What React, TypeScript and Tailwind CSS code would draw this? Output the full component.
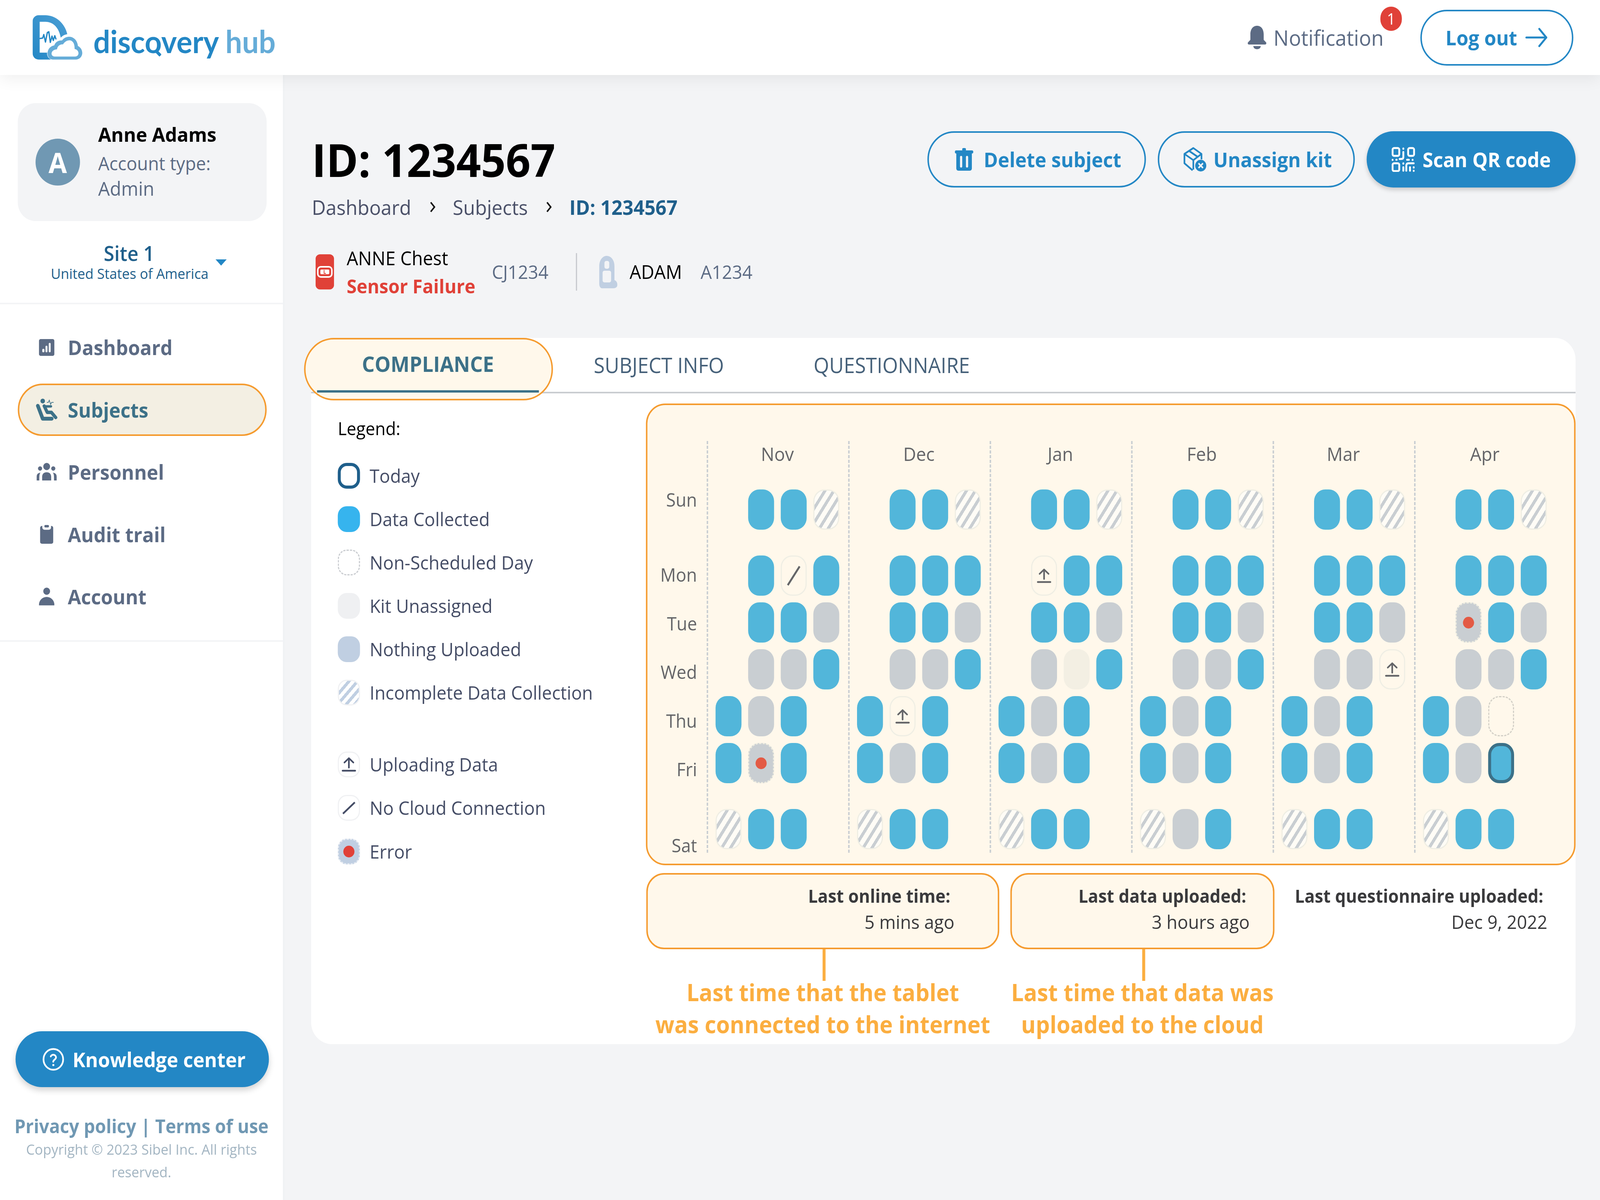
import React from "react";

const MONTHS: [string, string[]][] = [
  ["Nov", [".bbh", ".bnb", ".bbg", ".ggb", "bgb.", "beb.", "hbb."]],
  ["Dec", [".bbh", ".bbb", ".bbg", ".ggb", "bub.", "bgb.", "hbb."]],
  ["Jan", [".bbh", ".ubb", ".bbg", ".gkb", "bgb.", "bgb.", "hbb."]],
  ["Feb", [".bbh", ".bbb", ".bbg", ".ggb", "bgb.", "bgb.", "hgb."]],
  ["Mar", [".bbh", ".bbb", ".bbg", ".ggu", "bgb.", "bgb.", "hbb."]],
  ["Apr", [".bbh", ".bbb", ".ebg", ".ggb", "bgx.", "bgt.", "hbb."]],
];

const ROW_MARGIN = ["mt-[58px]", "mt-[66px]", "mt-[17px]", "mt-[17px]", "mt-[17px]", "mt-[17px]", "mt-[66px]"];

const DAYS: [string, string][] = [
  ["Sun", "mt-[117px]"],
  ["Mon", "mt-[126px]"],
  ["Tue", "mt-[59px]"],
  ["Wed", "mt-[58px]"],
  ["Thu", "mt-[59px]"],
  ["Fri", "mt-[58px]"],
  ["Sat", "mt-[129px]"],
];

function UploadGlyph({ color, size }: { color: string; size: number }) {
  return (
    <svg width={size} height={size} viewBox="0 0 40 40" fill="none" stroke={color} strokeWidth="4.4" strokeLinecap="round" strokeLinejoin="round">
      <path d="M8 15 L20 4 L32 15" />
      <path d="M20 5 V28" />
      <path d="M3 36 H37" />
    </svg>
  );
}

function Cell({ k }: { k: string }) {
  const base = "w-[70px] h-[103px] rounded-[30px] shrink-0";
  if (k === ".") return <div className="w-[70px] h-[103px] shrink-0" />;
  if (k === "b") return <div className={`${base} bg-[#52B6DA]`} />;
  if (k === "g") return <div className={`${base} bg-[#C9CED2]`} />;
  if (k === "k") return <div className={`${base} bg-[#F3EFE3]`} />;
  if (k === "t") return <div className={`${base} bg-[#52B6DA] border-[8px] border-[#3C7188]`} />;
  if (k === "x") return <div className={`${base} border-[3px] border-dashed border-[#D2CFC6]`} />;
  if (k === "h")
    return (
      <div className={`${base} border-[3px] border-[#EFEEE4] bg-[repeating-linear-gradient(123deg,#C9CED2_0,#C9CED2_8px,#FFFCF6_8px,#FFFCF6_20px)]`} />
    );
  if (k === "e")
    return (
      <div className={`${base} bg-[#C9CED2] border-[3px] border-dashed border-[#ECEBDF] flex items-center justify-center`}>
        <div className="w-[30px] h-[30px] rounded-full bg-[#E35A44]" />
      </div>
    );
  if (k === "u")
    return (
      <div className={`${base} border-[3px] border-[#EFEEE4] flex items-center justify-center`}>
        <UploadGlyph color="#646568" size={40} />
      </div>
    );
  return (
    <div className={`${base} border-[3px] border-[#EFEEE4] flex items-center justify-center`}>
      <svg width="44" height="60" viewBox="0 0 44 60" fill="none" stroke="#646568" strokeWidth="5">
        <path d="M6 54 L38 6" />
      </svg>
    </div>
  );
}

function Month({ name, rows }: { name: string; rows: string[] }) {
  return (
    <div className="w-[382px] shrink-0 border-l-4 border-dashed border-[#C9CED2] pl-[20px] pb-[9px]">
      <div className="h-[66px] leading-[66px] text-center text-[48px] text-[#646568] w-[334px]">{name}</div>
      {rows.map((r, i) => (
        <div key={i} className={`flex gap-[18px] ${ROW_MARGIN[i]}`}>
          {r.split("").map((c, j) => (
            <Cell key={j} k={c} />
          ))}
        </div>
      ))}
    </div>
  );
}

function LegendRow({ label, mt, children }: { label: string; mt: string; children: React.ReactNode }) {
  return (
    <div className={`flex items-center h-[66px] ${mt}`}>
      {children}
      <span className="ml-[26px] text-[48px] text-[#454D66] whitespace-nowrap">{label}</span>
    </div>
  );
}

const swatch = "w-[60px] h-[66px] rounded-[24px] shrink-0";

function Legend() {
  return (
    <div className="w-[904px] shrink-0 pl-[72px] pt-[56px]">
      <div className="h-[66px] leading-[66px] text-[46px] font-medium text-black">Legend:</div>
      <LegendRow label="Today" mt="mt-[56px]">
        <div className={`${swatch} bg-white border-[8px] border-[#1F5F8B]`} />
      </LegendRow>
      <LegendRow label="Data Collected" mt="mt-[45px]">
        <div className={`${swatch} bg-[#36B4EE]`} />
      </LegendRow>
      <LegendRow label="Non-Scheduled Day" mt="mt-[45px]">
        <div className={`${swatch} border-[3px] border-dashed border-[#C9CCD0]`} />
      </LegendRow>
      <LegendRow label="Kit Unassigned" mt="mt-[45px]">
        <div className={`${swatch} bg-[#EFF0F2]`} />
      </LegendRow>
      <LegendRow label="Nothing Uploaded" mt="mt-[45px]">
        <div className={`${swatch} bg-[#C0CFE2]`} />
      </LegendRow>
      <LegendRow label="Incomplete Data Collection" mt="mt-[45px]">
        <div className={`${swatch} border-[3px] border-[#F0F1F3] bg-[repeating-linear-gradient(132deg,#C0CFE2_0,#C0CFE2_8px,#FFFFFF_8px,#FFFFFF_17px)]`} />
      </LegendRow>
      <LegendRow label="Uploading Data" mt="mt-[118px]">
        <div className={`${swatch} border-[3px] border-[#F0F1F3] flex items-center justify-center`}>
          <UploadGlyph color="#454D66" size={40} />
        </div>
      </LegendRow>
      <LegendRow label="No Cloud Connection" mt="mt-[45px]">
        <div className={`${swatch} border-[3px] border-[#F0F1F3] flex items-center justify-center`}>
          <svg width="40" height="36" viewBox="0 0 40 36" fill="none" stroke="#454D66" strokeWidth="4.5">
            <path d="M4 33 L36 4" />
          </svg>
        </div>
      </LegendRow>
      <LegendRow label="Error" mt="mt-[46px]">
        <div className={`${swatch} bg-[#C0CFE2] border-[3px] border-dashed border-[#E6EBF2] flex items-center justify-center`}>
          <div className="w-[30px] h-[30px] rounded-full bg-[#E04138]" />
        </div>
      </LegendRow>
    </div>
  );
}

function Logo() {
  return (
    <div className="flex items-center">
      <svg width="135" height="114" viewBox="172 72 268 226">
        <defs>
          <linearGradient id="dg" x1="0" y1="1" x2="1" y2="0">
            <stop offset="0" stopColor="#2387C5" />
            <stop offset="1" stopColor="#4C9FD5" />
          </linearGradient>
        </defs>
        <path
          d="M204 72 H240 C295 72 345 112 358 168 C343 170 332 176 323 186 C314 138 285 105 240 105 H210 V262 H250 C248 272 252 288 270 297 H204 C186 297 172 283 172 265 V104 C172 86 186 72 204 72Z"
          fill="url(#dg)"
        />
        <path d="M212 190 L226 188 L232 170 L241 208 L251 160 L259 156 L267 210 L276 178 L283 200 L291 176 L297 192" fill="none" stroke="#2387C5" strokeWidth="7" strokeLinejoin="round" strokeLinecap="round" />
        <path d="M280 297 C258 297 250 275 252 262 C255 240 270 228 288 225 C295 205 315 198 330 200 C340 185 360 178 378 182 C400 188 412 205 415 228 C430 235 440 250 438 268 C436 285 420 297 405 297 Z" fill="#65ACD8" />
        <path d="M290 282 C278 282 272 272 274 264 C276 252 290 245 303 245 C305 228 320 218 335 220 C345 205 360 197 375 200 C392 205 398 222 397 243 C410 245 418 255 418 265 C418 275 410 282 400 282 Z" fill="#FFFFFF" />
      </svg>
      <div className="relative ml-[29px] mt-[18px] font-['Lato',sans-serif] text-[80px] leading-[100px] font-bold whitespace-nowrap">
        <span className="text-[#2387C5]">discovery</span>
        <span className="text-[#65ACD8]"> hub</span>
        <div className="absolute left-[166px] top-[77px] w-[18px] h-[8px] rounded-[2px] rotate-45 bg-[#2387C5]" />
      </div>
    </div>
  );
}

function NavIcon({ name, color }: { name: string; color: string }) {
  if (name === "Dashboard")
    return (
      <svg width="42" height="43" viewBox="206 133 82 84">
        <rect x="206" y="133" width="82" height="84" rx="10" fill={color} />
        <rect x="224" y="182" width="11" height="17" rx="5" fill="#fff" />
        <rect x="241" y="166" width="10" height="33" rx="5" fill="#fff" />
        <rect x="258" y="152" width="10" height="47" rx="5" fill="#fff" />
      </svg>
    );
  if (name === "Subjects")
    return (
      <svg width="60" height="58" viewBox="188 428 118 114" fill="none">
        <circle cx="226" cy="441" r="12" fill={color} />
        <path d="M248 448 H256 L261 437 L268 458 L273 448 H284" stroke={color} strokeWidth="3.5" />
        <path d="M200 465 L226 530 H274" stroke={color} strokeWidth="19" strokeLinecap="round" strokeLinejoin="round" />
        <path d="M234 466 L250 498 H272 L295 524" stroke={color} strokeWidth="17" strokeLinecap="round" strokeLinejoin="round" />
        <path d="M236 468 H270" stroke={color} strokeWidth="12" strokeLinecap="round" />
      </svg>
    );
  if (name === "Personnel")
    return (
      <svg width="56" height="46" viewBox="192 755 110 90" fill={color}>
        <circle cx="247" cy="773" r="18" />
        <circle cx="212" cy="783" r="11" />
        <circle cx="282" cy="783" r="11" />
        <path d="M223 843 V825 C223 808 235 802 247 802 C259 802 271 808 271 825 V843Z" />
        <path d="M194 843 V825 C194 812 200 806 214 804 C208 812 208 820 208 843 Z" />
        <path d="M300 843 V825 C300 812 294 806 280 804 C286 812 286 820 286 843 Z" />
      </svg>
    );
  if (name === "Audit trail")
    return (
      <svg width="36" height="49" viewBox="212 1058 70 96">
        <rect x="212" y="1065" width="70" height="89" rx="10" fill={color} />
        <rect x="224" y="1054" width="46" height="30" rx="12" fill="#fff" />
        <rect x="235" y="1060" width="24" height="12" rx="5" fill={color} />
      </svg>
    );
  return (
    <svg width="42" height="46" viewBox="206 1377 82 89" fill={color}>
      <circle cx="247" cy="1395" r="18" />
      <path d="M206 1466 C206 1440 225 1424 247 1424 C269 1424 288 1440 288 1466Z" />
    </svg>
  );
}

function NavItem({ name }: { name: string }) {
  const active = name === "Subjects";
  const color = active ? "#3C7188" : "#5C6B84";
  return (
    <div
      className={`h-[134px] w-[672px] rounded-[67px] flex items-center border-4 ${
        active ? "bg-[#F3EFE3] border-[#F59B2F] text-[#3C7188]" : "border-transparent text-[#5C6B84]"
      }`}
    >
      <div className="w-[131px] pl-[44px] pr-[27px] shrink-0 flex justify-center">
        <NavIcon name={name} color={color} />
      </div>
      <span className="text-[52px] font-bold whitespace-nowrap">{name}</span>
    </div>
  );
}

function Sidebar() {
  return (
    <aside className="w-[768px] h-[2880px] shrink-0 bg-white flex flex-col pt-[72px] pb-[43px] border-r-4 border-[#EFF1F4]">
      <div className="mx-[48px] w-[672px] h-[302px] rounded-[48px] bg-[#F3F4F6] flex items-center pl-[48px]">
        <div className="w-[120px] h-[120px] rounded-full bg-[#7098B3] flex items-center justify-center text-white text-[72px] font-bold shrink-0">A</div>
        <div className="ml-[49px]">
          <div className="-mt-[5px] mb-[9px] text-[51px] leading-[65px] font-bold text-black">Anne Adams</div>
          <div className="text-[48px] leading-[65px] text-[#5C6B84]">Account type:</div>
          <div className="text-[50px] leading-[65px] font-medium text-[#5C6B84]">Admin</div>
        </div>
      </div>
      <div className="flex mt-[54px] pl-[137px]">
        <div className="w-[423px] text-center text-[#1F5F8B]">
          <div className="text-[52px] leading-[56px] font-semibold">Site 1</div>
          <div className="text-[37px] leading-[48px] whitespace-nowrap">United States of America</div>
        </div>
        <div className="ml-[22px] mt-[44px] w-0 h-0 border-l-[15px] border-r-[15px] border-t-[16px] border-l-transparent border-r-transparent border-t-[#2387C5]" />
      </div>
      <div className="mt-[51px] border-b-4 border-[#F3F4F6]" />
      <nav className="mt-[43px] ml-[48px] flex flex-col gap-[25.5px]">
        {["Dashboard", "Subjects", "Personnel", "Audit trail", "Account"].map((n) => (
          <NavItem key={n} name={n} />
        ))}
      </nav>
      <div className="mt-[45px] border-b-4 border-[#F3F4F6]" />
      <div className="mt-auto">
        <div className="mx-[42px] w-[684px] h-[143px] rounded-[72px] bg-[#2387C5] shadow-[0_8px_16px_rgba(0,0,0,0.18)] flex items-center pl-[72px] text-white">
          <svg width="60" height="60" viewBox="0 0 24 24" fill="none" stroke="#fff" strokeWidth="1.8" strokeLinecap="round" strokeLinejoin="round">
            <circle cx="12" cy="12" r="10.6" />
            <path d="M9.2 9a3 3 0 0 1 5.7 1c0 2-3 2.6-3 4.4" />
            <path d="M12 17.8h.01" strokeWidth="2.2" />
          </svg>
          <span className="ml-[22px] text-[52px] font-bold whitespace-nowrap">Knowledge center</span>
        </div>
        <div className="mt-[70px] text-center text-[48px] leading-[60px] font-bold text-[#7098B3] whitespace-nowrap">Privacy policy | Terms of use</div>
        <div className="mx-auto w-[680px] text-center text-[37px] leading-[58px] text-[#A3B5C2]">Copyright © 2023 Sibel Inc. All rights reserved.</div>
      </div>
    </aside>
  );
}

function Chevron() {
  return (
    <svg width="18" height="30" viewBox="0 0 18 30" fill="none" stroke="#111" strokeWidth="4">
      <path d="M4 3 L14 15 L4 27" />
    </svg>
  );
}

const outlineBtn = "h-[144px] rounded-[72px] border-4 border-[#2387C5] flex items-center text-[#2387C5] text-[52px] font-bold whitespace-nowrap";

function TopBar() {
  return (
    <div className="flex justify-between">
      <div className="pt-[12px]">
        <h1 className="ml-[2px] text-[117px] leading-[120px] font-bold text-black whitespace-nowrap">ID: 1234567</h1>
        <div className="flex items-center mt-[27px] ml-[2px] h-[70px] text-[52px] text-[#4A5068]">
          <span>Dashboard</span>
          <span className="ml-[49px] mr-[45px]"><Chevron /></span>
          <span>Subjects</span>
          <span className="ml-[48px] mr-[46px]"><Chevron /></span>
          <span className="font-bold text-[#1F5F8B]">ID: 1234567</span>
        </div>
        <div className="flex items-center mt-[59px] ml-[12px] h-[144px]">
          <svg width="50" height="90" viewBox="0 0 50 90">
            <rect width="50" height="90" rx="12" fill="#E04138" />
            <rect x="6" y="32" width="38" height="26" rx="8" fill="none" stroke="#fff" strokeWidth="4" />
            <rect x="13" y="39" width="24" height="12" rx="3" fill="#fff" />
            <path d="M23 40 V49 H28" stroke="#E04138" strokeWidth="2" fill="none" />
          </svg>
          <div className="ml-[34px] w-[392px]">
            <div className="text-[49px] leading-[72px] text-black font-medium">ANNE Chest</div>
            <div className="text-[49px] leading-[72px] text-[#E04138] font-bold whitespace-nowrap">Sensor Failure</div>
          </div>
          <span className="text-[48px] text-[#5C6B84]">CJ1234</span>
          <div className="ml-[74px] w-[3px] h-[96px] bg-[#C4C7CC]" />
          <svg className="ml-[58px]" width="51" height="83" viewBox="0 0 51 83">
            <path d="M2 72 V26 C2 10 12 0 22 0 C33 0 43 10 43 26 V62 C49 64 51 70 51 74 C51 80 46 83 40 83 H10 C5 83 2 78 2 72Z" fill="#C0CFE2" />
            <rect x="16" y="13" width="13" height="20" rx="5" fill="#F3F4F6" />
            <rect x="11" y="38" width="23" height="30" rx="5" fill="#F3F4F6" />
          </svg>
          <span className="ml-[33px] text-[49px] text-black font-medium">ADAM</span>
          <span className="ml-[50px] text-[48px] text-[#5C6B84]">A1234</span>
        </div>
      </div>
      <div className="flex gap-[32px] items-start">
        <div className={`${outlineBtn} w-[590px] pl-[70px]`}>
          <svg width="50" height="58" viewBox="0 0 50 58">
            <rect x="20" y="0" width="10" height="8" rx="3" fill="#2387C5" />
            <rect x="0" y="6" width="50" height="8" rx="4" fill="#2387C5" />
            <path d="M4 14 H46 V52 C46 55 44 58 40 58 H10 C6 58 4 55 4 52Z" fill="#2387C5" />
            <rect x="14" y="20" width="6" height="30" rx="3" fill="#F3F4F6" />
            <rect x="30" y="20" width="6" height="30" rx="3" fill="#F3F4F6" />
          </svg>
          <span className="ml-[28px]">Delete subject</span>
        </div>
        <div className={`${outlineBtn} w-[532px] pl-[64px]`}>
          <svg width="64" height="64" viewBox="0 0 64 64" fill="none" stroke="#2387C5" strokeWidth="4.5" strokeLinejoin="round">
            <path d="M50 32 V18 L28 3 L4 18 V42 L26 60" />
            <path d="M4 18 L28 34 L50 18" />
            <path d="M28 34 V58" />
            <path d="M16 10 L39 25" />
            <circle cx="48" cy="48" r="15" fill="#2387C5" stroke="none" />
            <path d="M42 42 L54 54 M54 42 L42 54" stroke="#F3F4F6" strokeWidth="4" />
          </svg>
          <span className="ml-[18px]">Unassign kit</span>
        </div>
        <div className="w-[564px] h-[144px] rounded-[72px] bg-[#2387C5] shadow-[0_6px_12px_rgba(0,0,0,0.18)] flex items-center pl-[67px] text-white text-[52px] font-bold whitespace-nowrap">
          <svg width="64" height="64" viewBox="0 0 64 64" fill="none" stroke="#fff" strokeWidth="5" strokeLinecap="round" strokeLinejoin="round">
            <rect x="3" y="3" width="18" height="20" rx="4" />
            <rect x="45" y="3" width="16" height="20" rx="4" />
            <rect x="3" y="42" width="18" height="20" rx="4" />
            <path d="M32 4 V5 M32 13 V26 C32 30 29 31 26 31 H22 M3 33 V33.5 M13 33 H14 M42 33 H47 M57 33 V33.5 M32 42 V43 M32 52 V61 M40 61 V48 C40 44 42 42 46 42 H60 M50 52 V61 M60 52 V53 M60 61 V61.5" />
          </svg>
          <span className="ml-[20px]">Scan QR code</span>
        </div>
      </div>
    </div>
  );
}

function Tabs() {
  return (
    <div className="relative h-[142px] border-b-4 border-[#C9CCD0] flex items-center">
      <div className="absolute left-[-19px] top-0 w-[672px] h-[160px] rounded-[80px] bg-[#FFF8EB] border-4 border-[#F59B2F]" />
      <div className="relative ml-[16px] w-[599px] h-[142px] flex items-center justify-center text-[54px] font-bold text-[#3C7188] border-b-[6px] border-[#3C7188]">COMPLIANCE</div>
      <div className="relative ml-[148px] text-[54px] text-[#46617A] whitespace-nowrap">SUBJECT INFO</div>
      <div className="relative ml-[242px] text-[54px] text-[#46617A] whitespace-nowrap">QUESTIONNAIRE</div>
    </div>
  );
}

function Chart() {
  return (
    <div className="w-[2510px] rounded-[52px] border-4 border-[#F59B2F] bg-[#FFF8EB] flex pt-[92px] pb-[28px]">
      <div className="w-[160px] h-[1054px] shrink-0 pr-[26px] flex flex-col items-end text-[47px] leading-[66px] text-[#646568]">
        {DAYS.map(([d, mt]) => (
          <div key={d} className={`${mt} shrink-0`}>{d}</div>
        ))}
      </div>
      {MONTHS.map(([m, rows]) => (
        <Month key={m} name={m} rows={rows} />
      ))}
    </div>
  );
}

function Info() {
  const boxClass = "h-[195px] rounded-[48px] border-4 border-[#F59B2F] bg-[#FFF8EB] pt-[21px] text-right";
  const title = "text-[46px] leading-[66px] font-bold text-[#3A3A3C] whitespace-nowrap";
  const value = "text-[48px] leading-[66px] text-[#3A3A3C] mt-[1px] whitespace-nowrap";
  const note = "-mt-[12px] text-center text-[60px] leading-[82px] font-bold text-[#FBAE40] whitespace-nowrap";
  return (
    <div className="flex mt-[20px] ml-[1px]">
      <div className="w-[953px] shrink-0">
        <div className={`${boxClass} pr-[117px]`}>
          <div className={`${title} mr-[11px]`}>Last online time:</div>
          <div className={value}>5 mins ago</div>
        </div>
        <div className="ml-[476px] w-[8px] h-[81px] bg-[#FBAE40]" />
        <div className={note}>Last time that the tablet<br />was connected to the internet</div>
      </div>
      <div className="w-[713px] shrink-0 ml-[30px]">
        <div className={`${boxClass} pr-[63px]`}>
          <div className={`${title} mr-[9px]`}>Last data uploaded:</div>
          <div className={value}>3 hours ago</div>
        </div>
        <div className="ml-[356px] w-[8px] h-[81px] bg-[#FBAE40]" />
        <div className={note}>Last time that data was<br />uploaded to the cloud</div>
      </div>
      <div className="ml-[30px] w-[707px] pt-[25px] text-right">
        <div className={`${title} mr-[11px]`}>Last questionnaire uploaded:</div>
        <div className={value}>Dec 9, 2022</div>
      </div>
    </div>
  );
}

export default function App() {
  // The layout is drawn on the reference's 4320-wide canvas and fitted to the window's real width.
  const fit = window.innerWidth / 4320;
  return (
    <div className="w-screen h-[3072px] overflow-hidden">
      <div
        className="w-[4320px] h-[3072px] origin-top-left bg-[#F3F4F6] font-['Open_Sans',sans-serif]"
        style={{ transform: `scaleX(${fit})` }}
      >
        <header className="relative z-10 h-[192px] bg-white shadow-[0_8px_40px_rgba(0,0,0,0.07)] flex items-center justify-between pl-[88px] pr-[72px]">
          <Logo />
          <div className="flex items-center">
            <div className="relative flex items-center mr-[99px]">
              <svg width="52" height="60" viewBox="0 0 52 60" fill="#5C6B84">
                <path d="M26 0 C14 0 8 10 8 22 V36 L2 42 C0 44 1 48 4 48 H48 C51 48 52 44 50 42 L44 36 V22 C44 10 38 0 26 0Z" />
                <path d="M16 52 H36 C36 57 31 60 26 60 C21 60 16 57 16 52 Z" />
              </svg>
              <span className="ml-[18px] text-[55px] font-medium text-[#5C6B84] whitespace-nowrap">Notification</span>
              <div className="absolute right-[-49px] top-[-38px] w-[58px] h-[62px] rounded-full bg-[#E04138] flex items-center justify-center text-white text-[40px] font-medium">1</div>
            </div>
            <div className="w-[413px] h-[143px] rounded-[72px] border-4 border-[#2387C5] flex items-center pl-[64px] text-[#2387C5] text-[52px] font-bold whitespace-nowrap">
              <span>Log out</span>
              <svg className="ml-[22px]" width="60" height="50" viewBox="0 0 60 50" fill="none" stroke="#2387C5" strokeWidth="5" strokeLinecap="round" strokeLinejoin="round">
                <path d="M3 25 H57" />
                <path d="M38 3 L57 25 L38 47" />
              </svg>
            </div>
          </div>
        </header>
        <div className="flex">
          <Sidebar />
          <main className="flex-1 pl-[72px] pr-[72px] pt-[144px]">
            <TopBar />
            <section className="mt-[97px] h-[1808px] rounded-[56px] bg-white">
              <Tabs />
              <div className="flex">
                <Legend />
                <div className="pt-[26px]">
                  <Chart />
                  <Info />
                </div>
              </div>
            </section>
          </main>
        </div>
      </div>
    </div>
  );
}
